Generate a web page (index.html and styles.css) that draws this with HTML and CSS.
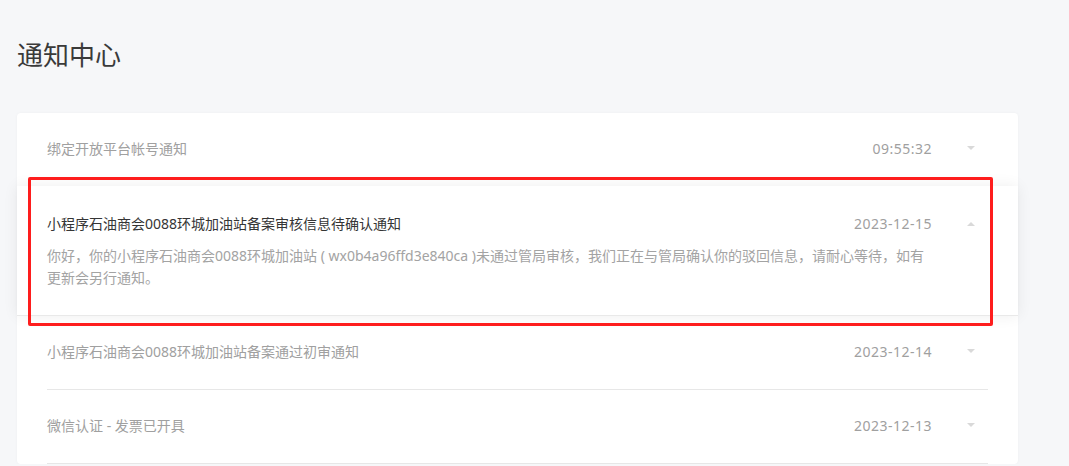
FILE: index.html
```html
<!DOCTYPE html>
<html lang="zh-CN">
<head>
<meta charset="utf-8">
<title>通知中心</title>
<link rel="stylesheet" href="styles.css">
</head>
<body>
<div class="page">
  <h1 class="page-title">通知中心</h1>
  <div class="card">
    <div class="item">
      <div class="item-inner">
        <div class="item-head">
          <span class="item-title">绑定开放平台帐号通知</span>
          <span class="item-time">09:55:32</span>
          <span class="item-arrow"><span class="tri tri-down"></span></span>
        </div>
      </div>
    </div>
    <div class="item item-open">
      <div class="item-inner">
        <div class="item-head">
          <span class="item-title">小程序石油商会0088环城加油站备案审核信息待确认通知</span>
          <span class="item-time">2023-12-15</span>
          <span class="item-arrow"><span class="tri tri-up"></span></span>
        </div>
        <div class="item-body">你好，你的小程序石油商会0088环城加油站 ( wx0b4a96ffd3e840ca )未通过管局审核，我们正在与管局确认你的驳回信息，请耐心等待，如有更新会另行通知。</div>
      </div>
      <div class="highlight"></div>
    </div>
    <div class="item">
      <div class="item-inner">
        <div class="item-head">
          <span class="item-title">小程序石油商会0088环城加油站备案通过初审通知</span>
          <span class="item-time">2023-12-14</span>
          <span class="item-arrow"><span class="tri tri-down"></span></span>
        </div>
      </div>
    </div>
    <div class="item">
      <div class="item-inner">
        <div class="item-head">
          <span class="item-title">微信认证 - 发票已开具</span>
          <span class="item-time">2023-12-13</span>
          <span class="item-arrow"><span class="tri tri-down"></span></span>
        </div>
      </div>
    </div>
  </div>
</div>
</body>
</html>
```

FILE: styles.css
```css
html, body {
  margin: 0;
  padding: 0;
  background: #f6f7f9;
  font-family: "Noto Sans", "Noto Sans CJK SC", sans-serif;
  color: #353535;
}

.page {
  padding: 37px 0 0 17px;
}

.page-title {
  margin: 0 0 40px;
  font-size: 26px;
  line-height: 36px;
  font-weight: 400;
  color: #3a3a3a;
}

.card {
  width: 1001px;
  background: #fff;
  border-radius: 4px;
  box-shadow: 0 0 3px rgba(0, 0, 0, 0.04);
}

.item {
  padding: 0 30px;
  position: relative;
}

.item-inner {
  padding: 25px 0 26px;
  border-bottom: 1px solid #e7e7e7;
}

.item-head {
  display: flex;
  align-items: center;
  font-size: 14px;
  line-height: 22px;
}

.item-title {
  flex: 1;
  color: #a0a0a0;
}

.item-time {
  color: #a0a0a0;
  letter-spacing: 0.5px;
}

.item-arrow {
  width: 56px;
  display: flex;
  justify-content: flex-end;
  padding-right: 13px;
  box-sizing: border-box;
}

.tri {
  width: 0;
  height: 0;
  border-left: 4px solid transparent;
  border-right: 4px solid transparent;
}

.tri-down {
  border-top: 4px solid #d9d9d9;
  margin-top: -2px;
}

.tri-up {
  border-bottom: 4px solid #d9d9d9;
}

.item-open {
  background: #fff;
  z-index: 1;
  box-shadow: 0 0 14px rgba(0, 0, 0, 0.07);
  border-bottom: 1px solid #e9e9e9;
  margin-top: -1px;
  border-top: 1px solid transparent;
}

.item-open .item-inner {
  border-bottom: none;
  padding: 26px 0 26px;
}

.item-open .item-title {
  color: #353535;
}

.item-body {
  margin-top: 10px;
  font-size: 14px;
  line-height: 22px;
  color: #a3a3a3;
  padding-right: 56px;
}

.highlight {
  position: absolute;
  left: 11px;
  top: -10px;
  width: 965px;
  height: 149px;
  border: 3px solid #fe1d1d;
  border-radius: 2px;
  box-sizing: border-box;
  pointer-events: none;
}
```
